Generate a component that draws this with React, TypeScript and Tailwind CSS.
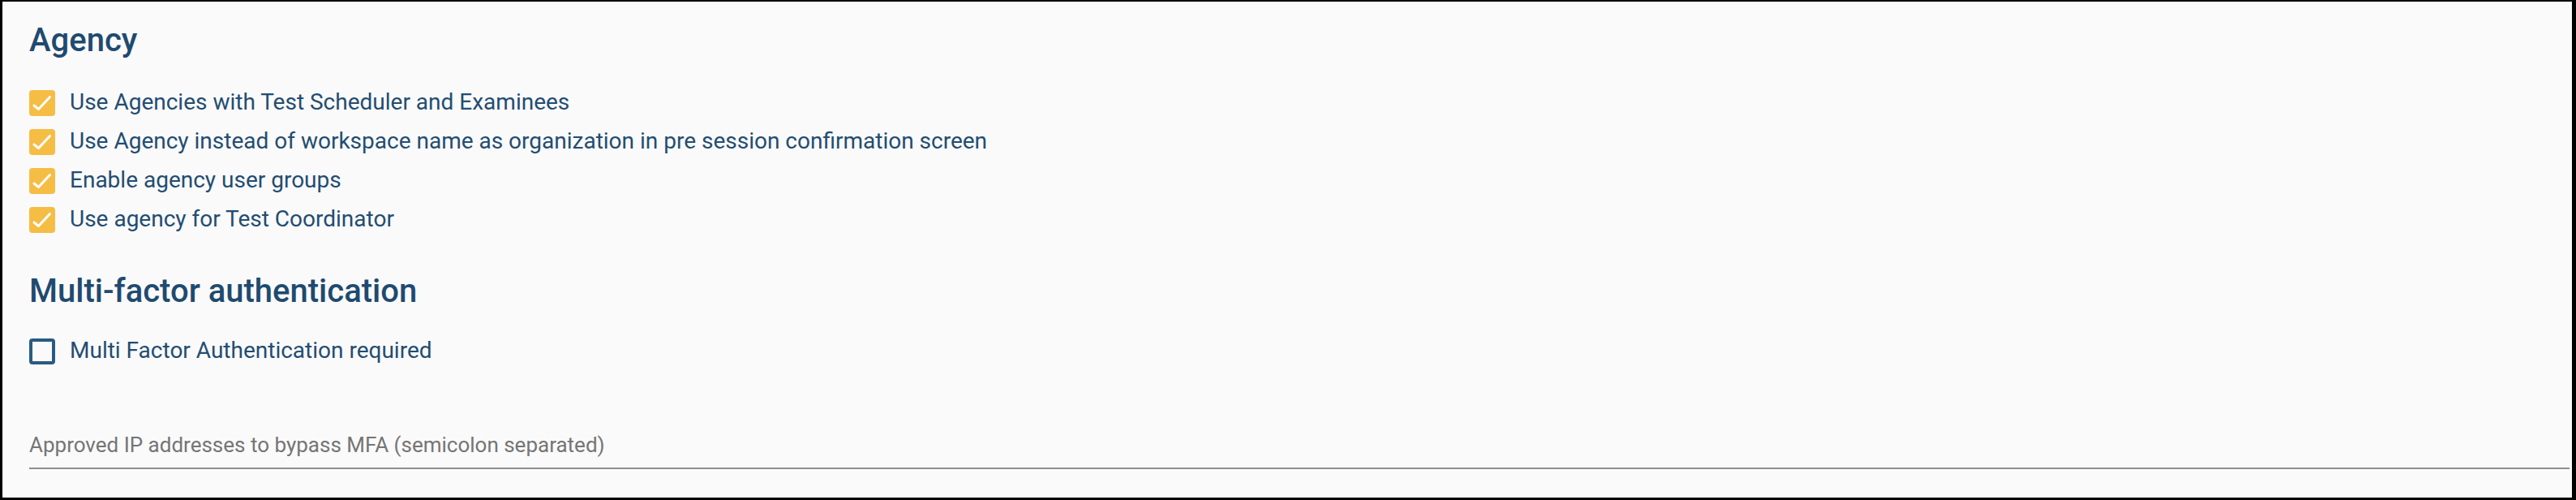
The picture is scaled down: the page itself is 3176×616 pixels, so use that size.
import React from 'react';

const agencyOptions = [
  'Use Agencies with Test Scheduler and Examinees',
  'Use Agency instead of workspace name as organization in pre session confirmation screen',
  'Enable agency user groups',
  'Use agency for Test Coordinator',
];

const CheckboxRow = ({ label, checked }: { label: string; checked: boolean }) => (
  <label className="flex h-[48px] items-center">
    {checked ? (
      <span className="flex h-[32px] w-[32px] items-center justify-center rounded-[4px] bg-[#f6bd45]">
        <svg width="32" height="32" viewBox="0 0 32 32" fill="none">
          <polyline
            points="6,19 11.5,23.5 25.5,8.5"
            stroke="#ffffff"
            strokeWidth="3"
            strokeLinecap="round"
            strokeLinejoin="round"
          />
        </svg>
      </span>
    ) : (
      <span className="h-[32px] w-[32px] rounded-[4px] border-[4px] border-[#295b82]" />
    )}
    <span className="ml-[18px] pb-[2px] text-[28px] leading-[40px] text-[#234d72]">{label}</span>
  </label>
);

export default function App() {
  return (
    <div
      className="h-[616px] w-[3176px] border-t-2 border-r-[5px] border-b-[3px] border-l-[3px] border-black bg-[#fafafa] pr-[3px] pl-[33px]"
      style={{ fontFamily: 'Roboto, "Noto Sans", sans-serif' }}
    >
      <h2 className="mt-[24px] text-[40px] leading-[48px] font-medium text-[#1f4a70]">Agency</h2>
      <div className="mt-[29px] flex flex-col">
        {agencyOptions.map((option) => (
          <CheckboxRow key={option} label={option} checked />
        ))}
      </div>

      <h2 className="mt-[40px] text-[40px] leading-[48px] font-medium text-[#1f4a70]">
        Multi-factor authentication
      </h2>
      <div className="mt-[26px]">
        <CheckboxRow label="Multi Factor Authentication required" checked={false} />
      </div>

      <div className="mt-[72px] border-b-2 border-[#8f8f8f] pb-[9px]">
        <input
          className="w-full bg-transparent text-[26px] leading-[38px] text-[#234d72] outline-none placeholder:text-[#757575]"
          placeholder="Approved IP addresses to bypass MFA (semicolon separated)"
        />
      </div>
    </div>
  );
}
